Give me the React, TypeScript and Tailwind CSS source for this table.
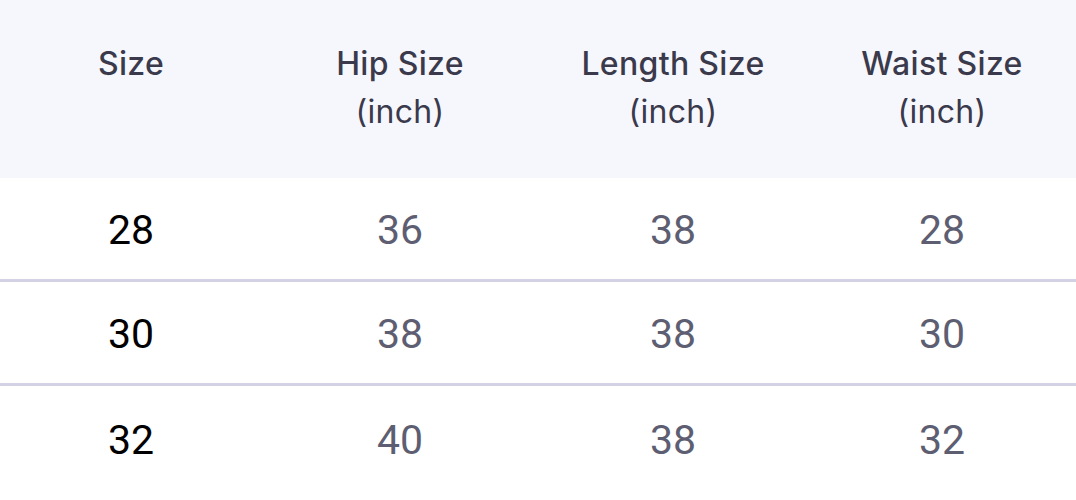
const rows = [
  ['28', '36', '38', '28'],
  ['30', '38', '38', '30'],
  ['32', '40', '38', '32'],
]

const cols = 'grid grid-cols-[262px_276px_270px_268px]'

export default function App() {
  return (
    <div className="w-[1076px] h-[500px] overflow-hidden bg-white">
      <div className={`${cols} h-[178px] bg-[#f6f7fc] pt-[40px] text-[32px] leading-[48px] tracking-[0.01em] font-medium text-[#3a3a4c] font-['Inter',sans-serif] text-center`}>
        <div>Size</div>
        <div>
          Hip Size
          <br />
          <span className="font-normal">(inch)</span>
        </div>
        <div>
          Length Size
          <br />
          <span className="font-normal">(inch)</span>
        </div>
        <div>
          Waist Size
          <br />
          <span className="font-normal">(inch)</span>
        </div>
      </div>
      {rows.map((r, i) => (
        <div
          key={i}
          className={`${cols} h-[104px] items-center pt-[5px] text-center text-[41px] font-['Roboto',sans-serif] ${i < rows.length - 1 ? 'border-b-[3px] border-[#d3d1e4]' : ''}`}
        >
          <div className="text-black">{r[0]}</div>
          <div className="text-[#5e5e72]">{r[1]}</div>
          <div className="text-[#5e5e72]">{r[2]}</div>
          <div className="text-[#5e5e72]">{r[3]}</div>
        </div>
      ))}
    </div>
  )
}
